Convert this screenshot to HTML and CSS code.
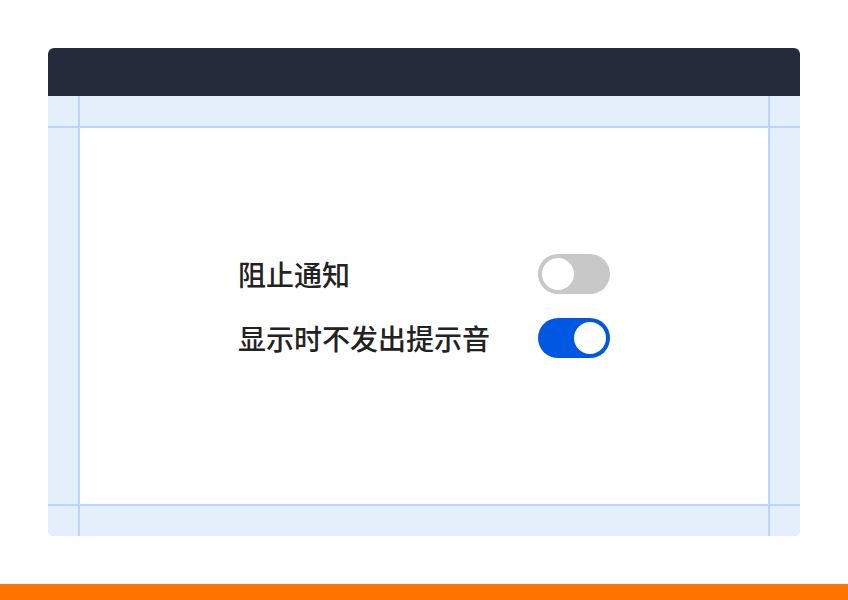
FILE: index.html
```html
<!doctype html>
<html>
<head>
    <meta charset="utf-8"/>
    <title>settings</title>
    <link rel="stylesheet" href="styles.css">
</head>
<body>

<div class="card">
    <div class="card-head"></div>
    <div class="frame">
        <div class="cell"></div><div class="cell"></div><div class="cell"></div>
        <div class="cell"></div>
        <div class="cell main">
            <div class="options">
                <span class="label">阻止通知</span>
                <span class="toggle"><span class="knob"></span></span>
                <span class="label">显示时不发出提示音</span>
                <span class="toggle on"><span class="knob"></span></span>
            </div>
        </div>
        <div class="cell"></div>
        <div class="cell"></div><div class="cell"></div><div class="cell"></div>
    </div>
</div>

<div class="bottom-bar"></div>

</body>
</html>
```

FILE: styles.css
```css
body {
    margin: 0;
    background: #fff;
    font-family: "Noto Sans CJK SC", "Noto Sans", sans-serif;
    height: 600px;
    display: flex;
    flex-direction: column;
}
.card {
    margin: 48px 48px 0;
    border-radius: 6px;
    overflow: hidden;
}
.card-head {
    height: 48px;
    background: #232a39;
}
.frame {
    display: grid;
    grid-template-columns: 30px 1fr 30px;
    grid-template-rows: 30px 376px 30px;
    gap: 2px;
    background: #b9d6fc;
}
.cell {
    background: #e5effc;
}
.cell.main {
    background: #fff;
    display: flex;
    justify-content: center;
    align-items: flex-start;
    padding-top: 126px;
}
.options {
    display: grid;
    grid-template-columns: auto auto;
    column-gap: 48px;
    row-gap: 24px;
    align-items: center;
}
.label {
    font-size: 28px;
    font-weight: 500;
    color: #222;
    line-height: 40px;
}
.toggle {
    width: 72px;
    height: 40px;
    border-radius: 20px;
    background: #c8c8c8;
    display: flex;
    align-items: center;
    padding: 0 4px;
    box-sizing: border-box;
}
.toggle .knob {
    width: 32px;
    height: 32px;
    border-radius: 50%;
    background: #fff;
}
.toggle.on {
    background: #0058e2;
    justify-content: flex-end;
}
.bottom-bar {
    margin-top: auto;
    height: 16px;
    background: #ff7300;
}
```
